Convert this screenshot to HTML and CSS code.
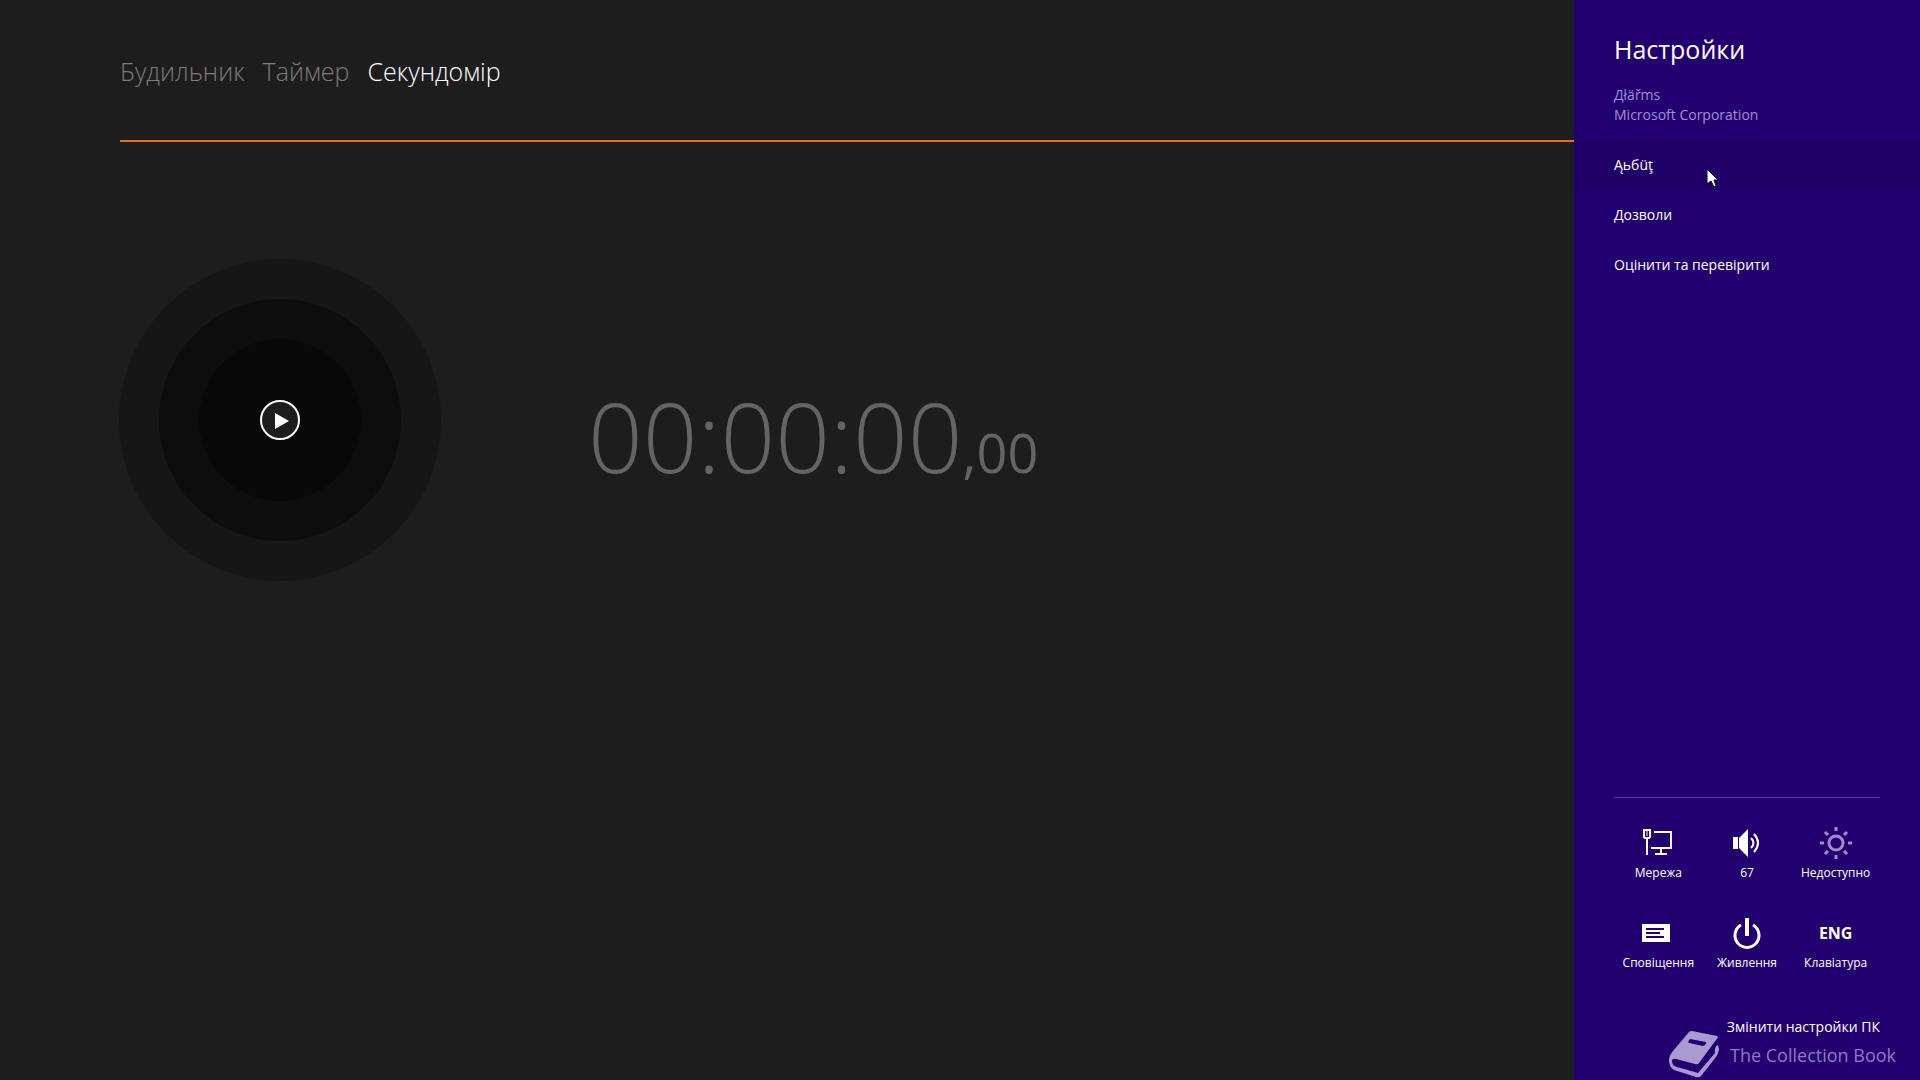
FILE: index.html
```html
<!DOCTYPE html>
<html lang="uk">
<head>
    <meta charset="UTF-8">
    <meta name="viewport" content="width=device-width, initial-scale=1.0">
    <title>Секундомір</title>
    <link rel="stylesheet" href="styles.css">
</head>
<body>

    <div class="screen">
        <!-- Застосунок -->
        <main class="app">
            <nav class="tabs">
                <button type="button" class="tab">Будильник</button>
                <button type="button" class="tab">Таймер</button>
                <button type="button" class="tab active">Секундомір</button>
            </nav>

            <section class="stopwatch">
                <div class="ring ring-outer">
                    <div class="ring ring-middle">
                        <div class="ring ring-inner">
                            <button type="button" class="play" aria-label="Почати">
                                <svg width="40" height="40" viewBox="0 0 40 40">
                                    <circle cx="20" cy="20" r="19" fill="#1d1d1d" stroke="#fff" stroke-width="2"/>
                                    <path d="M15 13v16l14-8z" fill="#fff"/>
                                </svg>
                            </button>
                        </div>
                    </div>
                </div>
                <div class="time">00:00:00<span class="fraction">,00</span></div>
            </section>
        </main>

        <!-- Панель настройок -->
        <aside class="panel">
            <h1 class="panel-title">Настройки</h1>
            <p class="app-info">Дłäřms<br>Microsoft Corporation</p>

            <nav class="menu">
                <a href="#" class="menu-item hover">Ąьбüţ</a>
                <a href="#" class="menu-item">Дозволи</a>
                <a href="#" class="menu-item">Оцінити та перевірити</a>
            </nav>

            <div class="quick">
                <button type="button" class="quick-item">
                    <svg class="icon" width="32" height="32" viewBox="0 0 32 32" fill="none" stroke="#fff" stroke-width="2">
                        <path d="M12 5h17v16H9M19 21v5M13 27h12"/>
                        <path d="M2 3h6v7l-1 1H3l-1-1zM5 11v17"/>
                        <path d="M5 4v5" stroke-width="1"/>
                    </svg>
                    <span>Мережа</span>
                </button>
                <button type="button" class="quick-item">
                    <svg class="icon" width="32" height="32" viewBox="0 0 32 32">
                        <path d="M2 10h5v12H2zM8 11l9-9v28l-9-9z" fill="#fff"/>
                        <path d="M20 11q5 5 0 10M23 7q8 9 0 18" fill="none" stroke="#fff" stroke-width="2"/>
                    </svg>
                    <span>67</span>
                </button>
                <button type="button" class="quick-item">
                    <svg class="icon" width="32" height="32" viewBox="0 0 32 32" fill="none" stroke="#a18bcb" stroke-width="3">
                        <circle cx="16" cy="16" r="7"/>
                        <path d="M16 0v4M16 28v4M0 16h4M28 16h4M5 5l3 3M24 24l3 3M27 5l-3 3M8 24l-3 3"/>
                    </svg>
                    <span>Недоступно</span>
                </button>
                <button type="button" class="quick-item">
                    <svg class="icon" width="32" height="32" viewBox="0 0 32 32">
                        <path d="M0 7h28v18H0z" fill="#fff"/>
                        <path d="M4 12h18M4 16h14M4 20h18" stroke="#220070" stroke-width="2"/>
                    </svg>
                    <span>Сповіщення</span>
                </button>
                <button type="button" class="quick-item">
                    <svg class="icon" width="32" height="32" viewBox="0 0 32 32" fill="none" stroke="#fff" stroke-width="3">
                        <path d="M10 8a12 12 0 1 0 12 0"/>
                        <path d="M16 1v18" stroke-width="4"/>
                    </svg>
                    <span>Живлення</span>
                </button>
                <button type="button" class="quick-item">
                    <strong class="icon lang">ENG</strong>
                    <span>Клавіатура</span>
                </button>
            </div>

            <a href="#" class="pc-settings">Змінити настройки ПК</a>
        </aside>

        <div class="watermark">
            <svg width="50" height="48" viewBox="0 0 50 48">
                <path d="M20 1Q21 0 23 0L48 5Q50 6 47 9L30 32Q29 34 26 33L7 28Q3 27 3 30 3 35 8 36L29 42 46 22Q45 18 48 14 50 15 50 19 49 23 47 26L32 45Q30 47 27 46L5 39Q0 36 0 29 0 25 4 20z" fill="#a99bd0"/>
                <path d="M21 8 37 11Q38 12 36 14L34 15 20 12Q18 11 21 8z" fill="#220070"/>
            </svg>
            <span>The Collection Book</span>
        </div>

        <svg class="cursor" width="13" height="20" viewBox="0 0 13 20">
            <path d="M1 1v15l4-3 3 6 2-1-2-6h4z" fill="#fff" stroke="#0a0024" stroke-width="1"/>
        </svg>
    </div>

</body>
</html>
```
FILE: styles.css
```css
/* Загальні стилі */
* {
    box-sizing: border-box;
}

body {
    margin: 0;
    background: #1d1d1d;
    color: #fff;
    font-family: "Open Sans", "Noto Sans", sans-serif;
}

button {
    padding: 0;
    border: none;
    background: none;
    color: inherit;
    font: inherit;
    cursor: pointer;
}

a {
    color: inherit;
    text-decoration: none;
}

.screen {
    position: relative;
    display: flex;
    min-height: 100vh;
    overflow: hidden;
}

/* Застосунок */
.app {
    flex: 1;
    padding-left: 120px;
}

.tabs {
    display: flex;
    gap: 18px;
    height: 142px;
    padding-top: 51px;
    align-items: flex-start;
    border-bottom: 2px solid #f26c0d;
}

.tab {
    color: #7c7c7c;
    font-size: 25px;
    font-weight: 300;
    line-height: 40px;
}

.tab.active {
    color: #fff;
}

/* Секундомір */
.stopwatch {
    display: flex;
    align-items: center;
    gap: 147px;
    margin: 117px 0 0 -1px;
}

.ring {
    display: flex;
    align-items: center;
    justify-content: center;
    border-radius: 50%;
    flex-shrink: 0;
}

.ring-outer {
    width: 322px;
    height: 322px;
    background: #161616;
}

.ring-middle {
    width: 242px;
    height: 242px;
    background: #0d0d0d;
}

.ring-inner {
    width: 162px;
    height: 162px;
    background: #080808;
}

.play {
    width: 40px;
    height: 40px;
}

.play svg {
    display: block;
}

.time {
    padding-top: 30px;
    color: #646464;
    font-size: 96px;
    font-weight: 300;
    white-space: nowrap;
}

.fraction {
    font-size: 54px;
    font-weight: 400;
}

/* Панель настройок */
.panel {
    display: flex;
    flex-direction: column;
    width: 346px;
    padding: 29px 0 40px;
    background: #220070;
}

.panel-title {
    margin: 0 40px;
    font-size: 25px;
    font-weight: 400;
    line-height: 40px;
}

.app-info {
    margin: 16px 40px 15px;
    color: #a48fd4;
    font-size: 14px;
    line-height: 20px;
}

.menu-item {
    display: block;
    padding: 0 40px;
    font-size: 14px;
    line-height: 50px;
}

.menu-item.hover {
    background: #200067;
}

.quick {
    display: grid;
    grid-template-columns: repeat(3, 1fr);
    row-gap: 34px;
    margin: auto 40px 0;
    padding-top: 29px;
    border-top: 1px solid #57389a;
}

.quick-item {
    display: flex;
    flex-direction: column;
    align-items: center;
    gap: 4px;
    height: 56px;
    font-size: 12px;
    line-height: 20px;
    white-space: nowrap;
}

.icon {
    height: 32px;
}

.lang {
    font-size: 16px;
    line-height: 32px;
}

.pc-settings {
    align-self: flex-end;
    margin: 41px 40px 0;
    font-size: 14px;
    line-height: 26px;
}

/* Водяний знак поверх панелі */
.watermark {
    position: absolute;
    right: 24px;
    bottom: 1px;
    display: flex;
    align-items: center;
    gap: 11px;
    color: #9079c8;
    font-size: 18px;
}

.cursor {
    position: absolute;
    top: 168px;
    right: 201px;
}
```
